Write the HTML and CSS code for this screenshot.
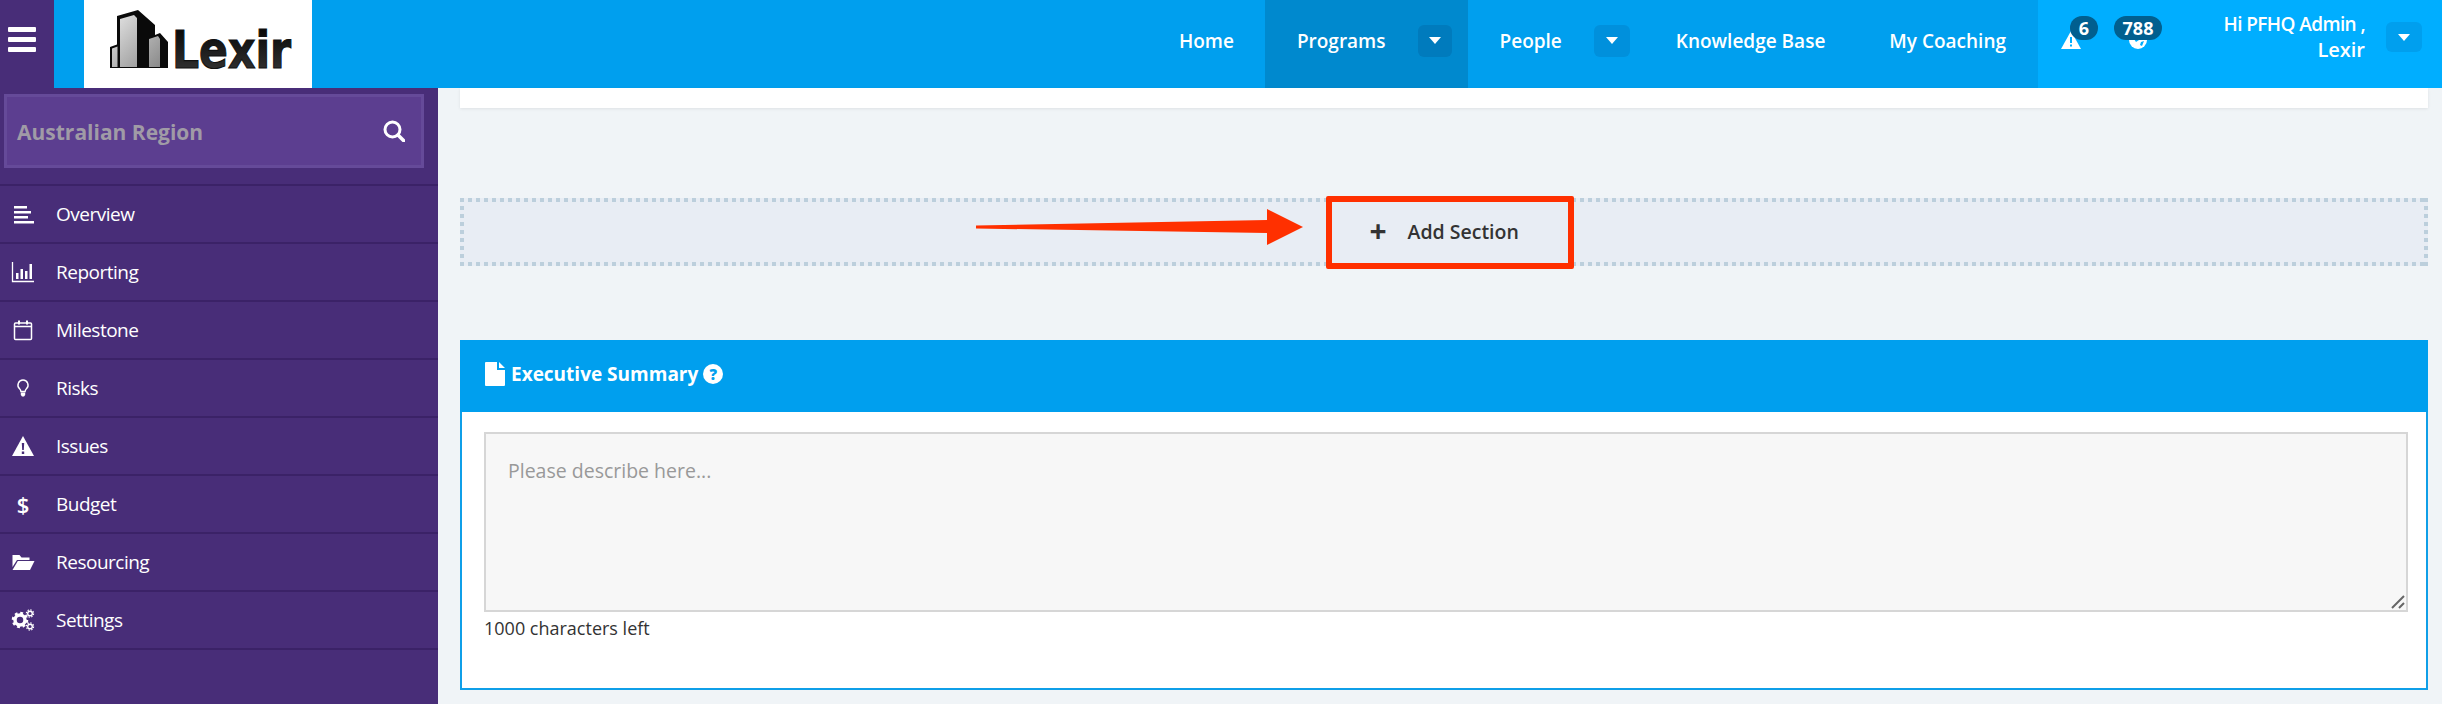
FILE: index.html
```html
<!DOCTYPE html>
<html lang="en">
<head>
<meta charset="utf-8">
<title>Lexir</title>
<link rel="stylesheet" href="styles.css">
</head>
<body>
<header class="topbar">
  <button class="burger" aria-label="Menu"><span></span><span></span><span></span></button>
  <div class="logo">
    <svg class="logo-art" width="228" height="88" viewBox="0 0 228 88">
      <defs>
        <linearGradient id="face" x1="0" x2="1" y1="0" y2="1"><stop offset="0" stop-color="#e6e6e6"/><stop offset="1" stop-color="#8a8a8a"/></linearGradient>
        <linearGradient id="txt" x1="0" x2="0" y1="0" y2="1"><stop offset="0" stop-color="#000"/><stop offset="1" stop-color="#3a3a3a"/></linearGradient>
      </defs>
      <path d="M26 68V47l7-2.500V16l21-6 17 15v10l5-2 8 9v26z" fill="#0a0a0a"/>
      <path d="M28 67V48.500l5.500-2V67zM36 67V19l14-4 3 3v49zM65 67V39l9-3 2 3v28z" fill="url(#face)"/>
      <text class="logo-text" x="88" y="68" textLength="119" lengthAdjust="spacingAndGlyphs" fill="url(#txt)">Lexir</text>
    </svg>
  </div>
  <nav class="nav">
    <a class="nav-item nav-home">Home</a>
    <a class="nav-item nav-current">Programs<span class="caret-btn"><i class="caret"></i></span></a>
    <a class="nav-item nav-people">People<span class="caret-btn"><i class="caret"></i></span></a>
    <a class="nav-item">Knowledge Base</a>
    <a class="nav-item">My Coaching</a>
  </nav>
  <div class="account">
    <div class="alert alert-warn">
      <svg width="20" height="18" viewBox="0 0 20 18"><path d="M10 0l10 18H0z" fill="#fff"/><path d="M9 6h2v6H9zM9 13.500h2v2H9z" fill="#00aeff"/></svg>
      <span class="badge">6</span>
    </div>
    <div class="alert alert-globe">
      <svg width="18" height="18" viewBox="0 0 18 18"><circle cx="9" cy="9" r="9" fill="#fff"/><path d="M4 3l5 2 1 4-3 2-2-3zM12 11l3-1-2 5-2-1z" fill="#00aeff"/></svg>
      <span class="badge badge-wide">788</span>
    </div>
    <div class="hello"><span class="hello-name">Hi PFHQ Admin ,</span><br>Lexir</div>
    <span class="caret-btn caret-user"><i class="caret"></i></span>
  </div>
</header>
<div class="layout">
  <aside class="sidebar">
    <div class="search">
      <span class="search-text">Australian Region</span>
      <svg width="22" height="22" viewBox="0 0 22 22"><circle cx="9.500" cy="9.500" r="7.500" fill="none" stroke="#fff" stroke-width="3"/><path d="M15 15l6 6" stroke="#fff" stroke-width="3.500" stroke-linecap="round"/></svg>
    </div>
    <ul class="menu">
      <li class="menu-item">
        <svg class="ico" viewBox="0 0 24 24"><path d="M3 4h13v2.500H3zM3 9h17v2.500H3zM3 14h14v2.500H3zM3 19h20v2.500H3z" fill="#fff"/></svg>Overview</li>
      <li class="menu-item">
        <svg class="ico" viewBox="0 0 24 24"><path d="M1.500 2v19.500H23" fill="none" stroke="#fff" stroke-width="1.300"/><path d="M5 13h2.500v6H5zM9.500 9h2.500v10H9.500zM14 11h2.500v8H14zM18.500 4H21v15h-2.500z" fill="#fff"/></svg>Reporting</li>
      <li class="menu-item">
        <svg class="ico" viewBox="0 0 24 24"><rect x="3.500" y="5" width="17" height="16.500" rx="1" fill="none" stroke="#fff" stroke-width="1.500"/><path d="M3.500 8.500h17" stroke="#fff" stroke-width="1.500"/><path d="M7 2.500h2v4H7zM15 2.500h2v4h-2z" fill="#fff"/></svg>Milestone</li>
      <li class="menu-item">
        <svg class="ico" viewBox="0 0 24 24"><path d="M12 4a5 5 0 0 0-3.400 8.700c.9.900 1.200 1.800 1.300 2.800h4.200c.1-1 .4-1.900 1.300-2.800A5 5 0 0 0 12 4z" fill="none" stroke="#fff" stroke-width="1.400"/><path d="M9.800 16.500h4.400v2.500l-1.200 1.500h-2l-1.200-1.500z" fill="#fff"/></svg>Risks</li>
      <li class="menu-item">
        <svg class="ico" viewBox="0 0 24 24"><path d="M12 2l11 20H1z" fill="#fff"/><path d="M10.800 9h2.400l-.4 7h-1.600zM10.800 17.500h2.400v2.400h-2.400z" fill="#482d78"/></svg>Issues</li>
      <li class="menu-item"><span class="ico ico-glyph">$</span>Budget</li>
      <li class="menu-item">
        <svg class="ico" viewBox="0 0 24 24"><path d="M1.500 5h7l2 2.500h8v2.500H6L1.500 17z" fill="#fff"/><path d="M6.800 11H23.500l-4.500 9H1.500z" fill="#fff"/></svg>Resourcing</li>
      <li class="menu-item">
        <svg class="ico" viewBox="0 0 24 24">
          <circle cx="9" cy="12" r="5" fill="none" stroke="#fff" stroke-width="3.500"/><circle cx="9" cy="12" r="7" fill="none" stroke="#fff" stroke-width="2.500" stroke-dasharray="2.800 2.700"/>
          <circle cx="19" cy="5.500" r="2.300" fill="none" stroke="#fff" stroke-width="1.400"/><circle cx="19" cy="5.500" r="3.600" fill="none" stroke="#fff" stroke-width="1.200" stroke-dasharray="1.500 1.300"/>
          <circle cx="19" cy="18.500" r="2.300" fill="none" stroke="#fff" stroke-width="1.400"/><circle cx="19" cy="18.500" r="3.600" fill="none" stroke="#fff" stroke-width="1.200" stroke-dasharray="1.500 1.300"/>
        </svg>Settings</li>
    </ul>
  </aside>
  <main class="main">
    <div class="top-card"></div>
    <section class="drop">
      <svg class="arrow" width="340" height="68" viewBox="0 0 340 68"><path d="M2 27.500L293 22V11l36 18-36 18V35L2 30.500z" fill="#ff3000"/></svg>
      <div class="add-section"><span class="plus">+</span>Add Section</div>
    </section>
    <section class="panel">
      <h2 class="panel-head">
        <svg width="20" height="24" viewBox="0 0 20 24"><path d="M1 0h11v8h8v15a1 1 0 0 1-1 1H1a1 1 0 0 1-1-1V1a1 1 0 0 1 1-1zM14 0l6 6h-6z" fill="#fff"/></svg>
        <span class="panel-title">Executive Summary</span>
        <span class="help">?</span>
      </h2>
      <div class="panel-body">
        <div class="field">
          <textarea class="describe" placeholder="Please describe here..."></textarea>
          <svg class="grip" width="14" height="14" viewBox="0 0 14 14"><path d="M1 13L13 1M8 13l5-5" stroke="#666" stroke-width="2"/></svg>
        </div>
        <p class="counter">1000 characters left</p>
      </div>
    </section>
  </main>
</div>
</body>
</html>
```
FILE: styles.css
```css
* { box-sizing: border-box; }
html, body { margin: 0; height: 704px; overflow: hidden; }
body { font-family: "Open Sans", "Liberation Sans", sans-serif; background: #f0f4f7; color: #333; }

.topbar { display: flex; height: 88px; background: #009fee; color: #fff; }
.burger { width: 54px; height: 88px; padding: 27px 8px 0; border: 0; background: #482d78; display: flex; flex-direction: column; gap: 5px; }
.burger span { display: block; width: 28px; height: 5px; background: #fff; border-radius: 1px; }
.logo { width: 228px; height: 88px; margin-left: 30px; background: #fff; }
.logo-art { display: block; overflow: visible; }
.logo-text { font-family: "DejaVu Sans", sans-serif; font-weight: 700; font-size: 52px; stroke: #111; stroke-width: 1.200px; }

.nav { display: flex; margin-left: auto; }
.nav-item { display: flex; align-items: center; height: 88px; padding: 0 32px 7px; font-size: 19px; font-weight: 600; }
.nav-item:has(.caret-btn) { padding-right: 16px; }
.nav-home { padding-right: 31px; }
.nav-people.nav-item { padding-right: 14px; }
.nav-current { background: #0089ce; }
.caret-btn { display: flex; align-items: center; justify-content: center; width: 36px; height: 32px; margin-left: 32px; border-radius: 6px; background: #0090dc; }
.nav-current .caret-btn { width: 34px; background: #007bbd; }
.caret { width: 0; height: 0; border-left: 6px solid transparent; border-right: 6px solid transparent; border-top: 7px solid #fff; }

.account { position: relative; display: flex; flex: none; width: 404px; height: 88px; padding-left: 23px; background: #00aeff; }
.alert { position: relative; flex: none; height: 88px; padding-top: 31px; }
.alert svg { display: block; }
.alert-warn { width: 68px; }
.alert-globe { width: 60px; }
.badge { position: absolute; top: 16px; left: 9px; min-width: 28px; height: 24px; padding: 0 4px; border-radius: 12px; background: #015f8f; font-size: 18px; line-height: 24px; font-weight: 700; text-align: center; }
.badge-wide { left: -15px; width: 48px; padding: 0; }
.hello { flex: 0 0 176px; padding-top: 11px; font-size: 20px; font-weight: 600; line-height: 25px; text-align: right; white-space: nowrap; }
.hello-name { font-size: 19px; letter-spacing: -.6px; }
.caret-user { flex: none; width: 36px; height: 30px; margin: 22px 0 0 21px; background: #009fee; }

.layout { display: flex; height: 616px; }
.sidebar { width: 438px; flex: none; background: #482d78; padding-top: 6px; }
.search { display: flex; align-items: center; justify-content: space-between; width: 420px; height: 74px; margin-left: 4px; padding: 0 16px 0 10px; background: #5c3e90; border: 3px solid #654a99; }
.search-text { padding-top: 2px; font-size: 21px; font-weight: 700; color: #a09ba6; }
.menu { list-style: none; margin: 16px 0 0; padding: 0; border-bottom: 2px solid #3b2267; }
.menu-item { display: flex; align-items: center; height: 58px; padding-left: 11px; border-top: 2px solid #3b2267; color: #fff; font-size: 19px; letter-spacing: -.5px; }
.ico { width: 24px; height: 24px; margin-right: 21px; flex: none; }
.ico-glyph { font-size: 22px; font-weight: 600; line-height: 24px; text-align: center; letter-spacing: 0; }

.main { flex: 1; padding: 0 14px 0 22px; }
.top-card { height: 20px; background: #fff; box-shadow: 0 1px 3px rgba(0,0,0,.08); }
.drop {
  position: relative; display: flex; align-items: center; justify-content: center; height: 68px; margin-top: 90px;
  background-color: #e8edf4;
  background-image:
    repeating-linear-gradient(90deg, #bccfdc 0 4px, transparent 4px 8px),
    repeating-linear-gradient(90deg, #bccfdc 0 4px, transparent 4px 8px),
    repeating-linear-gradient(0deg, #bccfdc 0 4px, transparent 4px 8px),
    repeating-linear-gradient(0deg, #bccfdc 0 4px, transparent 4px 8px);
  background-size: 100% 4px, 100% 4px, 4px 100%, 4px 100%;
  background-position: 0 0, 0 100%, 0 0, 100% 0;
  background-repeat: no-repeat;
}
.arrow { position: absolute; left: 514px; top: 0; }
.add-section { display: flex; align-items: center; width: 248px; height: 73px; margin-left: 11px; padding: 0 0 2px 38px; border: 6px solid #ff3000; border-radius: 2px; background: #e8edf4; color: #333; font-size: 19.500px; font-weight: 600; }
.plus { width: 38px; font-size: 30px; font-weight: 700; line-height: 1; }

.panel { height: 350px; margin-top: 74px; border: 2px solid #0f9fe8; border-top: 0; background: #fff; }
.panel-head { display: flex; align-items: center; height: 72px; margin: 0 -2px; padding: 0 0 4px 25px; background: #009fee; color: #fff; font-size: 19px; font-weight: 700; }
.panel-title { margin-left: 6px; }
.help { width: 20px; height: 20px; margin-left: 5px; border-radius: 50%; background: #fff; color: #009fee; font-size: 15px; line-height: 20px; font-weight: 800; text-align: center; }
.panel-body { padding: 20px 18px 0 22px; }
.field { position: relative; }
.describe { display: block; width: 100%; height: 180px; padding: 23px 22px; border: 2px solid #d6d6d6; background: #f7f7f7; font: 19.500px "Open Sans", sans-serif; resize: none; outline: 0; }
.describe::placeholder { color: #999; opacity: 1; }
.grip { position: absolute; right: 3px; bottom: 3px; }
.counter { margin: 5px 0 0; font-size: 18px; line-height: 22px; color: #333; }
```
